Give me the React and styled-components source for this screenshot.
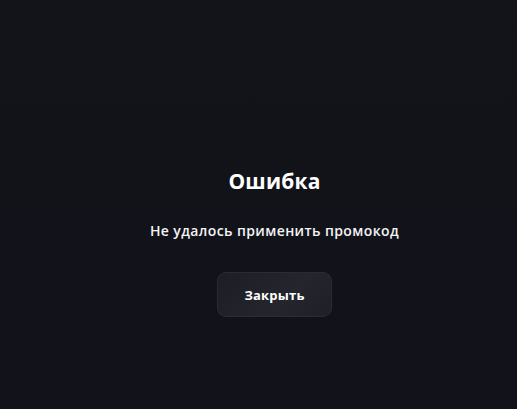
import React from "react";
import styled, { createGlobalStyle } from "styled-components";

const GlobalStyle = createGlobalStyle`
  html, body {
    margin: 0;
    padding: 0;
    background: #121319;
  }
  body {
    font-family: "Open Sans", "Noto Sans", sans-serif;
    color: #ffffff;
  }
`;

const Page = styled.div`
  width: 517px;
  height: 409px;
  box-sizing: border-box;
  background: linear-gradient(180deg, #131419 0%, #11121a 100%);
  display: flex;
  justify-content: center;
  padding: 164px 0 0 32px;
`;

const Dialog = styled.div`
  display: flex;
  flex-direction: column;
  align-items: center;
`;

const Title = styled.h2`
  margin: 0;
  font-size: 21px;
  font-weight: 700;
  line-height: 34px;
  letter-spacing: 0.2px;
`;

const Message = styled.p`
  margin: 23px 0 0;
  font-size: 14px;
  font-weight: 600;
  line-height: 20px;
  letter-spacing: 0.4px;
  color: #f3f3f5;
`;

const CloseButton = styled.button`
  margin-top: 31px;
  width: 115px;
  height: 45px;
  border-radius: 9px;
  border: 1px solid #2a2b33;
  background: linear-gradient(135deg, #1d1e25 0%, #24252d 60%, #1f2027 100%);
  color: #ffffff;
  font-family: "Open Sans", "Noto Sans", sans-serif;
  font-size: 13px;
  font-weight: 700;
  letter-spacing: 0.2px;
  cursor: pointer;
`;

export default function App() {
  return (
    <>
      <GlobalStyle />
      <Page>
        <Dialog>
          <Title>Ошибка</Title>
          <Message>Не удалось применить промокод</Message>
          <CloseButton>Закрыть</CloseButton>
        </Dialog>
      </Page>
    </>
  );
}
